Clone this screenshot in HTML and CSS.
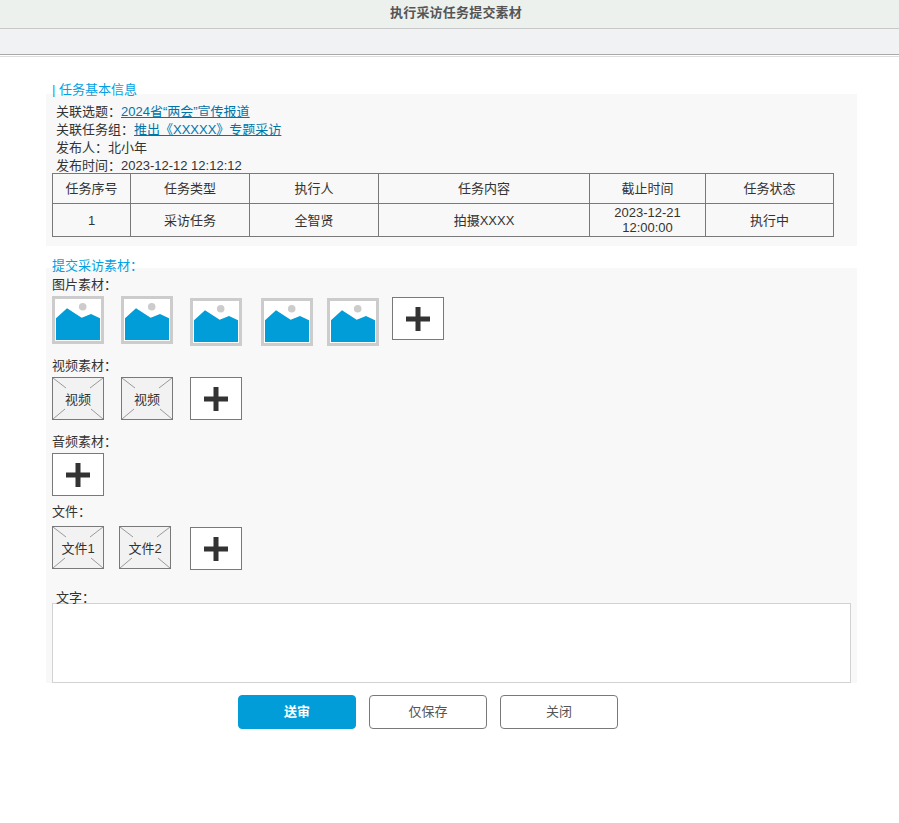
FILE: index.html
```html
<!DOCTYPE html>
<html lang="zh-CN">
<head>
<meta charset="utf-8">
<title>执行采访任务提交素材</title>
<link rel="stylesheet" href="styles.css">
</head>
<body>
<svg class="defs" width="0" height="0" aria-hidden="true">
  <symbol id="pic" viewBox="0 0 52 48">
    <rect x="1.5" y="1.5" width="49" height="45" fill="#fff" stroke="#ccc" stroke-width="3"/>
    <circle cx="30.7" cy="10.7" r="3.8" fill="#ccc"/>
    <path d="M4 22.3 15 12.3 29.7 21.7 39 18 48 22.3V44H4Z" fill="#009dd9"/>
  </symbol>
  <symbol id="plus" viewBox="0 0 24 24">
    <path d="M9.5 0h5v9.5H24v5h-9.5V24h-5v-9.5H0v-5h9.5Z" fill="#333"/>
  </symbol>
  <symbol id="cross" viewBox="0 0 50 41" preserveAspectRatio="none">
    <path d="M0 0 13 10M50 0 37 10M0 41 12 31M50 41 38 31" fill="none" stroke="#999" stroke-width="1"/>
  </symbol>
</svg>
<header class="title-bar">执行采访任务提交素材</header>
<div class="tool-bar"></div>
<div class="rule"></div>
<main class="content">
  <h2 class="section-title first">| 任务基本信息</h2>
  <section class="panel info">
    <p class="line">关联选题：<a href="#">2024省“两会”宣传报道</a></p>
    <p class="line">关联任务组：<a href="#">推出《XXXXX》专题采访</a></p>
    <p class="line">发布人：北小年</p>
    <p class="line last">发布时间：2023-12-12 12:12:12</p>
    <table class="tasks">
      <colgroup>
        <col class="c1"><col class="c2"><col class="c3"><col class="c4"><col class="c5"><col class="c6">
      </colgroup>
      <tr class="head"><td>任务序号</td><td>任务类型</td><td>执行人</td><td>任务内容</td><td>截止时间</td><td>任务状态</td></tr>
      <tr class="body"><td>1</td><td>采访任务</td><td>全智贤</td><td>拍摄XXXX</td><td>2023-12-21<br>12:00:00</td><td>执行中</td></tr>
    </table>
  </section>
  <h2 class="section-title second">提交采访素材：</h2>
  <section class="panel materials">
    <div class="label l-pic">图片素材：</div>
    <div class="row r-pic">
      <svg class="pic"><use href="#pic"/></svg>
      <svg class="pic g17"><use href="#pic"/></svg>
      <svg class="pic g17 low"><use href="#pic"/></svg>
      <svg class="pic g19 low"><use href="#pic"/></svg>
      <svg class="pic g14 low"><use href="#pic"/></svg>
      <div class="add g13 mid"><svg class="plus"><use href="#plus"/></svg></div>
    </div>
    <div class="label l-video">视频素材：</div>
    <div class="row r-std">
      <div class="ph"><svg class="cross"><use href="#cross"/></svg><span>视频</span></div>
      <div class="ph g17"><svg class="cross"><use href="#cross"/></svg><span>视频</span></div>
      <div class="add g17"><svg class="plus"><use href="#plus"/></svg></div>
    </div>
    <div class="label l-audio">音频素材：</div>
    <div class="row r-std">
      <div class="add"><svg class="plus"><use href="#plus"/></svg></div>
    </div>
    <div class="label l-file">文件：</div>
    <div class="row r-file">
      <div class="ph"><svg class="cross"><use href="#cross"/></svg><span>文件1</span></div>
      <div class="ph g15"><svg class="cross"><use href="#cross"/></svg><span>文件2</span></div>
      <div class="add g19 mid"><svg class="plus"><use href="#plus"/></svg></div>
    </div>
    <div class="label l-text">文字：</div>
    <textarea class="text-input"></textarea>
  </section>
  <div class="actions">
    <button class="btn primary" type="button">送审</button>
    <button class="btn" type="button">仅保存</button>
    <button class="btn" type="button">关闭</button>
  </div>
</main>
</body>
</html>
```

FILE: styles.css
```css
* { box-sizing: border-box; }
html, body { margin: 0; padding: 0; background: #fff; }
body {
  font-family: "Liberation Sans", "Noto Sans CJK SC", sans-serif;
  font-size: 13px;
  line-height: 18px;
  color: #333;
}
.defs { position: absolute; }

.title-bar {
  height: 29px;
  padding-left: 13px;
  line-height: 26px;
  letter-spacing: 0.2px;
  background: #edf1ee;
  border-bottom: 1px solid #c8c8c8;
  text-align: center;
  font-weight: 700;
  color: #555;
}
.tool-bar {
  height: 26px;
  background: #f0f2f4;
  border-bottom: 1px solid #aaa;
}
.rule {
  height: 2px;
  border-bottom: 1px solid #ddd;
}

.content { padding: 0 42px 0 46px; }

.section-title {
  position: relative;
  height: 18px;
  margin: 0;
  padding: 1px 0 0 6px;
  font-size: 13px;
  line-height: 18px;
  font-weight: 400;
  color: #00a0e4;
}
.section-title.first { margin-top: 23px; margin-bottom: -4px; }
.section-title.second { margin-top: 10px; margin-bottom: -6px; }

.panel { background: #f8f8f8; }
.info { height: 152px; padding: 8px 0 0 6px; }

.line { margin: 0; padding: 1px 0 0 4px; height: 18px; }
.line.last { height: 17px; }
.line a { color: #0075a8; text-decoration: underline; }

.tasks {
  width: 781px;
  border-collapse: collapse;
  table-layout: fixed;
  line-height: 15px;
}
.tasks td {
  border: 1px solid #797979;
  padding: 0;
  text-align: center;
  vertical-align: middle;
}
.tasks .head { height: 30px; }
.tasks .body { height: 33px; }
.c1 { width: 78px; }
.c2 { width: 119px; }
.c3 { width: 129px; }
.c4 { width: 211px; }
.c5 { width: 116px; }
.c6 { width: 128px; }

.materials { height: 415px; padding: 7px 6px 0; }
.label { height: 18px; padding-top: 1px; }
.l-video { margin-top: 10px; }
.l-audio { margin-top: 12px; }
.l-file { margin-top: 6px; }
.l-text { position: relative; margin-top: 18px; margin-bottom: -3px; padding-left: 4px; }

.row { display: flex; align-items: flex-start; margin-top: 3px; }
.r-pic { height: 50px; }
.r-std { height: 43px; }
.r-file { height: 44px; margin-top: 6px; }

.g13 { margin-left: 13px; }
.g14 { margin-left: 14px; }
.g15 { margin-left: 15px; }
.g17 { margin-left: 17px; }
.g19 { margin-left: 19px; }
.low { margin-top: 2px; }
.mid { margin-top: 1px; }

.pic { display: block; width: 52px; height: 48px; flex: none; }

.add, .ph {
  position: relative;
  display: flex;
  align-items: center;
  justify-content: center;
  flex: none;
  width: 52px;
  height: 43px;
  border: 1px solid #797979;
}
.add { background: #fff; }
.ph { background: #f2f2f2; }
.ph span { position: relative; padding-top: 2px; }
.plus { display: block; width: 24px; height: 24px; }
.cross { position: absolute; left: 0; top: 0; width: 50px; height: 41px; }

.text-input {
  display: block;
  width: 799px;
  height: 80px;
  padding: 0;
  border: 1px solid #d2d2d2;
  border-radius: 0;
  background: #fff;
  outline: none;
  resize: none;
}

.actions {
  display: flex;
  gap: 13px;
  margin-top: 12px;
  padding-left: 192px;
}
.btn {
  width: 118px;
  height: 34px;
  padding: 0;
  border: 1px solid #797979;
  border-radius: 4px;
  background: #fff;
  color: #555;
  font: inherit;
}
.btn.primary {
  border-color: #009dd9;
  background: #009dd9;
  color: #fff;
  font-weight: 700;
}
```
